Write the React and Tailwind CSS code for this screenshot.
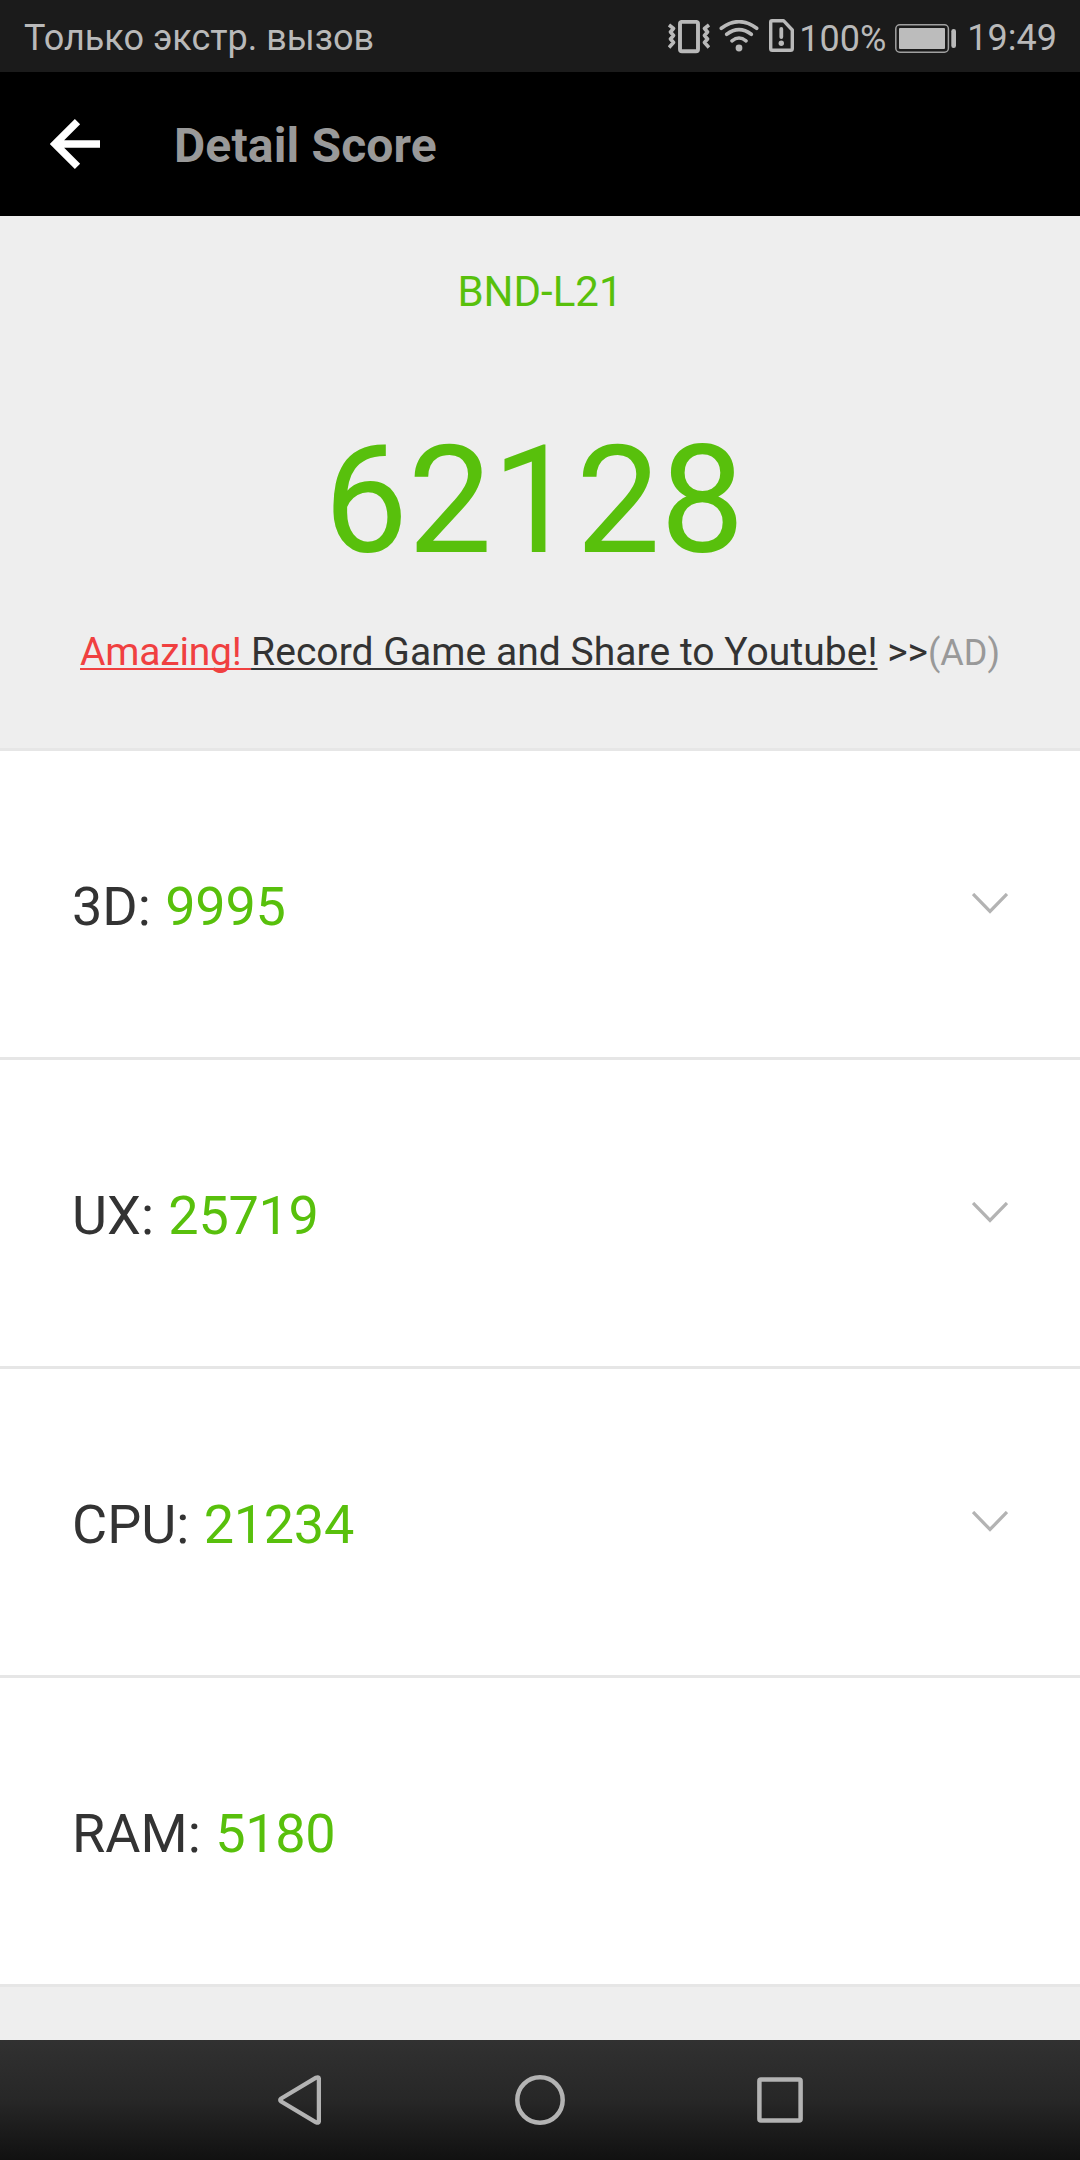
import React from 'react';

const scores = [
  { id: '3d', name: '3D', value: '9995', expandable: true },
  { id: 'ux', name: 'UX', value: '25719', expandable: true },
  { id: 'cpu', name: 'CPU', value: '21234', expandable: true },
  { id: 'ram', name: 'RAM', value: '5180', expandable: false },
];

function VibrateIcon() {
  return (
    <svg width="42" height="34" viewBox="0 0 42 34" fill="none" stroke="#b9b9b9">
      <rect x="12" y="1.900" width="18" height="29.300" rx="2" strokeWidth="3.900" />
      <path d="M1 5l4.500 3.500-3 3.500 3 3.500-3 3.500 3 3.500L1 27.500M41 5l-4.500 3.500 3 3.500-3 3.500 3 3.500-3 3.500L41 27.500" strokeWidth="3.600" strokeLinejoin="round" />
    </svg>
  );
}

function WifiIcon() {
  return (
    <svg width="40" height="34" viewBox="0 0 40 34" fill="none" stroke="#b9b9b9" strokeWidth="3.600" strokeLinecap="round">
      <path d="M2.300 8.300Q20-5 37.700 8.300M7.700 14.300Q20 5 32.300 14.300M13 20.800Q20 15.200 27 20.800" />
      <circle cx="20" cy="28" r="3.400" fill="#b9b9b9" stroke="none" />
    </svg>
  );
}

function SimAlertIcon() {
  return (
    <svg width="25" height="33" viewBox="0 0 25 33" fill="none" stroke="#b9b9b9">
      <path d="M3 1.700h11.500L23.300 11v18.500q0 1.800-1.800 1.800H3.200q-1.500 0-1.500-1.800V3.200Q1.700 1.700 3 1.700z" strokeWidth="3.400" strokeLinejoin="round" />
      <path d="M12.300 10v8" strokeWidth="3.800" strokeLinecap="round" />
      <circle cx="12.300" cy="24.300" r="2.700" fill="#b9b9b9" stroke="none" />
    </svg>
  );
}

function BatteryIcon() {
  return (
    <svg width="62" height="29" viewBox="0 0 62 29" fill="none">
      <rect x="0.800" y="0.800" width="52.600" height="27.400" rx="4" stroke="#a0a0a0" strokeWidth="1.500" />
      <rect x="4" y="4" width="46" height="21" rx="1" fill="#bcbcbc" />
      <rect x="56.300" y="5" width="4.700" height="19" rx="2.300" fill="#b9b9b9" />
    </svg>
  );
}

function StatusBar() {
  return (
    <div className="flex h-[72px] items-center bg-[#1b1b1b] pt-[2px] pl-6 pr-[23px] text-4xl leading-[42px] text-[#b9b9b9]">
      <span className="mr-auto pt-[2px]">Только экстр. вызов</span>
      <VibrateIcon />
      <div className="ml-[9px]"><WifiIcon /></div>
      <div className="ml-[10px] pb-[3px]"><SimAlertIcon /></div>
      <span className="ml-[5px] pt-[3px]">100%</span>
      <div className="ml-[9px] pt-[2px]"><BatteryIcon /></div>
      <span className="ml-[10px] pt-[1px]">19:49</span>
    </div>
  );
}

function Header() {
  return (
    <header className="flex h-36 items-center bg-black pl-[50px]">
      <svg width="50" height="50" viewBox="0 0 50 50" fill="none" stroke="#fff">
        <path d="M50 25H7M27.500 2.700L5 25l22.500 22.300" strokeWidth="7.500" />
      </svg>
      <h1 className="ml-[74px] pt-1 text-5xl font-bold tracking-[0.15px] text-[#999]">Detail Score</h1>
    </header>
  );
}

function Summary() {
  return (
    <section className="flex h-[535px] flex-col items-center border-b-[3px] border-[#e6e6e6] bg-[#eee]">
      <p className="mt-[51px] text-[42px] leading-[50px] text-[#58c00c]">BND-L21</p>
      <p className="mt-[96px] pr-[12px] text-[150px] leading-[176px] tracking-[-0.2px] text-[#58c00c]">62128</p>
      <p className="mt-[40px] flex items-baseline whitespace-pre text-[39px] leading-[46px] text-[#333]">
        <span className="tracking-[-0.2px] text-[#f04040] underline decoration-2 underline-offset-[3px] [text-decoration-skip-ink:none]">Amazing! </span>
        <span className="tracking-[0.05px] underline decoration-2 underline-offset-[3px] [text-decoration-skip-ink:none]">Record Game and Share to Youtube!</span>
        <span> &gt;&gt;</span>
        <span className="text-4xl text-[#999]">(AD)</span>
      </p>
    </section>
  );
}

function ScoreRow({ name, value, expandable }) {
  return (
    <li className="flex h-[309px] items-center justify-between border-b-[3px] border-[#e6e6e6] bg-white px-[72px]">
      <span className="pt-1.5 text-[54px] leading-[64px] text-[#333]">
        {name}: <span className="ml-px tracking-[-0.3px] text-[#58c00c]">{value}</span>
      </span>
      {expandable && (
        <svg className="-mt-px" width="36" height="21" viewBox="0 0 36 21" fill="none" stroke="#b3b3b3">
          <path d="M1 1l17 17.500L35 1" strokeWidth="3.300" />
        </svg>
      )}
    </li>
  );
}

function NavBar() {
  return (
    <nav className="flex h-[120px] items-center bg-linear-to-b from-[#313131] via-[#272727] to-[#111] pl-[278px]">
      <svg width="43" height="50" viewBox="0 0 43 50" fill="none" stroke="#b3b3b3">
        <path d="M3.200 23.500L38 2.700q2.900-1.200 2.900 1.300v42q0 2.500-2.900 1.300L3.200 26.500q-2-1.500 0-3z" strokeWidth="4.300" />
      </svg>
      <svg className="ml-[194px]" width="50" height="50" viewBox="0 0 50 50" fill="none" stroke="#b3b3b3">
        <circle cx="25" cy="25" r="22.700" strokeWidth="4.500" />
      </svg>
      <svg className="ml-[192px]" width="46" height="46" viewBox="0 0 46 46" fill="none" stroke="#b3b3b3">
        <rect x="2.400" y="2.400" width="41.200" height="41.200" rx="1.500" strokeWidth="4.500" />
      </svg>
    </nav>
  );
}

export default function App() {
  return (
    <div className="flex h-[2160px] w-[1080px] flex-col overflow-hidden bg-[#eee] font-[Roboto,sans-serif]">
      <StatusBar />
      <Header />
      <main className="flex-1">
        <Summary />
        <ul>
          {scores.map((score) => (
            <ScoreRow key={score.id} {...score} />
          ))}
        </ul>
      </main>
      <NavBar />
    </div>
  );
}
